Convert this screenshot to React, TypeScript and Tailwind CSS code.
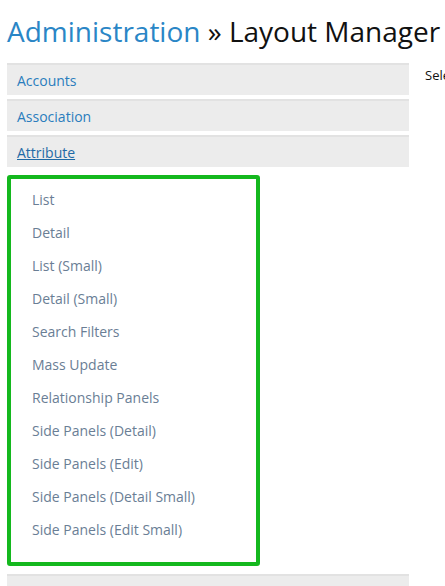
import React from "react";

const panels = ["Accounts", "Association"];
const items = [
  "List",
  "Detail",
  "List (Small)",
  "Detail (Small)",
  "Search Filters",
  "Mass Update",
  "Relationship Panels",
  "Side Panels (Detail)",
  "Side Panels (Edit)",
  "Side Panels (Detail Small)",
  "Side Panels (Edit Small)",
];

export default function App() {
  return (
    <div
      className="w-[445px] h-[586px] overflow-hidden bg-white text-[#333]"
      style={{ fontFamily: '"Open Sans", "Noto Sans", sans-serif' }}
    >
      <h1 className="pl-[7px] pt-[11px] text-[28px] leading-[40px] whitespace-nowrap text-[#111]">
        <span className="text-[#2a86c6]">Administration</span> » Layout Manager
      </h1>
      <div className="flex gap-[16px] pl-[7px] mt-[12px]">
        <div className="w-[402px] shrink-0 flex flex-col gap-[4px]">
          {panels.map((p) => (
            <div key={p} className="h-[32px] bg-[#ececec] border-t-2 border-[#e2e2e2] flex items-center pl-[10px]">
              <span className="text-[14px] text-[#2a7dbd]">{p}</span>
            </div>
          ))}
          <div className="h-[32px] bg-[#ececec] border-t-2 border-[#e2e2e2] flex items-center pl-[10px]">
            <span className="text-[14px] text-[#1f6aa6] underline">Attribute</span>
          </div>
          <div className="mt-[4px] w-[253px] border-4 border-[#14b81e] rounded-[3px] pt-[4px] pb-[16px]">
            {items.map((i) => (
              <div key={i} className="h-[33px] flex items-center pl-[21px] text-[14px] text-[#6a7e95]">
                {i}
              </div>
            ))}
          </div>
          <div className="mt-[4px] h-[32px] bg-[#ececec] border-t-2 border-[#e2e2e2] flex items-center pl-[10px]">
            <span className="text-[14px] text-[#2a7dbd]">Attribute Group</span>
          </div>
        </div>
        <div className="pt-[3px] text-[13px] text-[#111] whitespace-nowrap">Select a scope.</div>
      </div>
    </div>
  );
}
